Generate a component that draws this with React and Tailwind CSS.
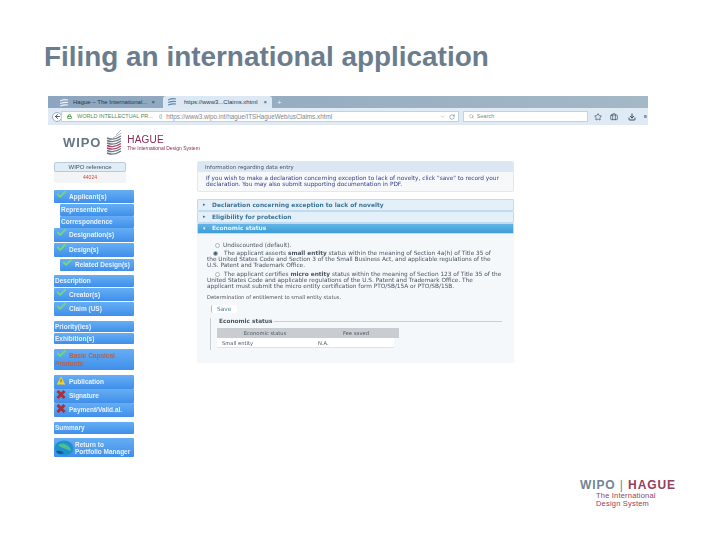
import { Check, RotateCw, Search, Star, Lock, ArrowLeft, Download, Briefcase, ChevronDown } from "lucide-react";

const navItems = [
  { label: "Applicant(s)", mark: "check", top: 0, height: 13 },
  { label: "Representative", sub: true, height: 12, top: 1 },
  { label: "Correspondence", sub: true, height: 12 },
  { label: "Designation(s)", mark: "check", height: 14 },
  { label: "Design(s)", mark: "check", height: 14, top: 1 },
  { label: "Related Design(s)", mark: "check", sub: true, height: 12, top: 2 },
  { label: "Description", height: 12, top: 4 },
  { label: "Creator(s)", mark: "check", height: 13, top: 1 },
  { label: "Claim (US)", mark: "check", height: 14, top: 1 },
  { label: "Priority(ies)", height: 11, top: 5 },
  { label: "Exhibition(s)", height: 11, top: 1 },
  { label: "Basic Capsical", second: "Products", mark: "check", red: true, height: 21, top: 5 },
  { label: "Publication", mark: "warn", height: 14, top: 5 },
  { label: "Signature", mark: "cross", height: 14 },
  { label: "Payment/Valid.al.", mark: "cross", height: 14 },
  { label: "Summary", height: 12, top: 5 },
];

function Mark({ type }) {
  if (type === "check") {
    return <Check size={11} strokeWidth={4} className="text-[#74d872] mr-[2px] -mt-[5px] shrink-0" />;
  }
  if (type === "warn") {
    return (
      <svg width="10" height="9" viewBox="0 0 10 10" className="mr-[3px] -mt-[3px] shrink-0">
        <path d="M5 .5 9.7 9.5H.3Z" fill="#f2d02c" />
        <rect x="4.5" y="3.5" width="1" height="3.5" fill="#6b5a10" />
      </svg>
    );
  }
  return (
    <svg width="10" height="9" viewBox="0 0 10 9" className="mr-[3px] -mt-[3px] shrink-0">
      <path d="M1.5 1 8.5 8M8.5 1 1.5 8" stroke="#a8323c" strokeWidth="3" />
    </svg>
  );
}

function NavButton({ item }) {
  return (
    <div
      className={`flex flex-col justify-center rounded-[1px] bg-gradient-to-b from-[#66aef4] to-[#3f8fea] px-[1px] text-[6.5px] leading-[8px] font-bold whitespace-nowrap ${
        item.sub ? "ml-[6px]" : ""
      } ${item.red ? "text-[#b9604a]" : "text-[#e6f2ff]"}`}
      style={{ height: item.height, marginTop: item.top || 0 }}
    >
      <div className={`flex items-center ${item.mark ? "pl-[1px]" : ""}`}>
        {item.mark && <Mark type={item.mark} />}
        <span>{item.label}</span>
      </div>
      {item.second && <div>{item.second}</div>}
    </div>
  );
}

function WipoGlobe() {
  const rows = [9, 11.5, 14, 16.5, 19, 21.5, 24];
  return (
    <svg width="16" height="28" viewBox="0 0 16 28" className="ml-[5px] mr-[5px]">
      <path d="M15 1 10 6M15.5 4 7 9" stroke="#9aa2a8" strokeWidth=".8" />
      {rows.map((y, i) => (
        <path
          key={y}
          d={`M1 ${y} Q8 ${y + 3} 15 ${y - 2}`}
          fill="none"
          stroke={i === 3 || i === 4 ? "#a8486a" : "#6f7a83"}
          strokeWidth="1.4"
        />
      ))}
    </svg>
  );
}

// favicon in the browser tabs
function TabIcon({ color }) {
  return (
    <svg width="8" height="8" viewBox="0 0 8 8" className="mr-[5px] shrink-0">
      <path d="M0 2Q4 0 8 1M0 4.5Q4 3 8 3.5M0 7Q4 5.5 8 6" fill="none" stroke={color} strokeWidth="1.1" />
    </svg>
  );
}

function AccordionRow({ label, open }) {
  return (
    <div
      className={`flex items-center pl-[5px] text-[5.9px] font-bold border border-[#c3dced] rounded-[1px] ${
        open ? "bg-gradient-to-b from-[#63b5e6] to-[#3d9dd8] text-[#e8f5fd] h-[11px]" : "h-[12px] bg-[#e3f0f9] text-[#3d7396]"
      }`}
    >
      <span className="w-[9px] text-[5px]">{open ? "▾" : "▸"}</span>
      {label}
    </div>
  );
}

export default function App() {
  return (
    <div className="w-[720px] h-[540px] bg-white flex flex-col overflow-hidden font-['Liberation_Sans',sans-serif]">
      <h1 className="pt-[42px] pl-[44px] text-[27.9px] leading-[30px] font-bold text-[#6a7d8e] whitespace-nowrap">
        Filing an international application
      </h1>

      {/* Browser screenshot, soft like the scaled original */}
      <div className="mt-[24px] ml-[48px] w-[600px] blur-[0.45px]">
        {/* Tabs */}
        <div className="h-[12px] flex items-end bg-gradient-to-r from-[#8da6bf] to-[#a4b8c6] text-[6px] text-[#26384a] whitespace-nowrap">
          <div className="w-[112px] h-[11px] flex items-center justify-between pl-[12px] pr-[5px]">
            <TabIcon color="#e8f0f6" />
            <span className="flex-1">Hague – The International...</span>
            <span>×</span>
          </div>
          <div className="ml-[3px] w-[109px] h-[12px] flex items-center justify-between pl-[5px] pr-[5px] bg-[#dce9f4] rounded-t-[3px]">
            <TabIcon color="#5d86ad" />
            <span className="flex-1 ml-[3px]">https://www3...Claims.xhtml</span>
            <span>×</span>
          </div>
          <span className="ml-[5px] h-[11px] text-[8px] leading-[11px] text-[#e8f0f6]">+</span>
        </div>

        {/* Address bar */}
        <div className="h-[17px] flex items-center bg-[#dfeaf5] pl-[4px] pr-[1px] text-[5.5px] text-[#7d8790] whitespace-nowrap">
          <div className="w-[10px] h-[10px] rounded-full bg-white border border-[#9fb0bf] flex items-center justify-center shrink-0">
            <ArrowLeft size={7} strokeWidth={3} className="text-[#33485a]" />
          </div>
          <div className="ml-[-1px] w-[398px] h-[11px] flex items-center bg-white border border-[#c4d2de] pl-[5px] pr-[3px]">
            <Lock size={5} strokeWidth={4} className="text-[#3f9a3f] mr-[5px]" />
            <span className="text-[#5c8a5c] w-[78px]">WORLD INTELLECTUAL PR...</span>
            <span className="mx-[4px]">(|</span>
            <span className="text-[6.3px]">https://www3.wipo.int/hague/ITSHagueWeb/usClaims.xhtml</span>
            <ChevronDown size={5} className="ml-auto mr-[4px]" />
            <RotateCw size={6} className="text-[#5a7386]" />
          </div>
          <div className="ml-[4px] w-[125px] h-[11px] flex items-center bg-white border border-[#c4d2de] pl-[5px]">
            <Search size={5} className="mr-[3px]" />
            <span>Search</span>
          </div>
          <Star size={8} strokeWidth={2} className="ml-[6px] text-[#33485a]" />
          <Briefcase size={8} strokeWidth={2} className="ml-[8px] text-[#33485a]" />
          <Download size={8} strokeWidth={3} className="ml-[10px] text-[#33485a]" />
          <span className="ml-[8px] text-[#33485a]">≡</span>
        </div>

        {/* Page header */}
        <div className="h-[36px] flex items-center pl-[15px]">
          <span className="text-[13px] font-bold tracking-[0.9px] text-[#657685]">WIPO</span>
          <WipoGlobe />
          <div className="flex flex-col">
            <span className="text-[10px] leading-[10px] tracking-[0.2px] text-[#8b2a50]">HAGUE</span>
            <span className="text-[5px] leading-[6px] text-[#8b2a50]">The International Design System</span>
          </div>
        </div>

        <div className="flex">
          {/* Sidebar */}
          <aside className="w-[149px] pl-[6px] shrink-0">
            <div className="w-[72px] h-[21px] mt-[1px] rounded-[2px] bg-[#f2f4f6] text-center">
              <div className="h-[10px] rounded-[2px] border border-[#b9cbd8] bg-[#e1edf6] text-[6px] leading-[8px] text-[#42525f]">
                WIPO reference
              </div>
              <div className="text-[5px] leading-[10px] text-[#d0483c]">44024</div>
            </div>
            <nav className="w-[80px] mt-[7px]">
              {navItems.map((item) => (
                <NavButton key={item.label} item={item} />
              ))}
              <div className="mt-[4px] h-[19px] flex items-center rounded-[1px] bg-gradient-to-b from-[#66aef4] to-[#3f8fea] text-[6.5px] leading-[7px] font-bold text-[#e6f2ff]">
                <svg width="20" height="16" viewBox="0 0 20 16" className="mr-[1px] shrink-0">
                  <ellipse cx="10" cy="8" rx="9.5" ry="7.5" fill="#1f8fd0" />
                  <path d="M4 5Q9 2 13 5T17 11Q12 9 9 8T4 5Z" fill="#4cc08a" />
                  <path d="M2 11Q7 10 10 13 6 15 3 13Z" fill="#0e5d9a" />
                </svg>
                <div className="whitespace-nowrap">
                  <div>Return to</div>
                  <div>Portfolio Manager</div>
                </div>
              </div>
            </nav>
          </aside>

          {/* Main content */}
          <main className="w-[317px] shrink-0 font-['DejaVu_Sans',sans-serif] whitespace-nowrap">
            <section className="h-[31px] rounded-[2px] border border-[#e3e8ec] bg-[#f6f8fa]">
              <div className="h-[10px] pl-[7px] bg-[#dbe8f3] text-[5.4px] leading-[10px] text-[#46535e]">
                Information regarding data entry
              </div>
              <div className="pl-[8px] pt-[3px] text-[5.8px] leading-[6px] text-[#35408c]">
                <div>If you wish to make a declaration concerning exception to lack of novelty, click "save" to record your</div>
                <div>declaration. You may also submit supporting documentation in PDF.</div>
              </div>
            </section>

            <div className="mt-[7px]">
              <AccordionRow label="Declaration concerning exception to lack of novelty" />
              <AccordionRow label="Eligibility for protection" />
              <AccordionRow label="Economic status" open />
            </div>

            <section className="h-[129px] bg-[#f5f8fb] pl-[10px] pt-[8px] text-[5.8px] leading-[6px] text-[#4a5560]">
              <div className="flex items-center pl-[8px]">
                <span className="w-[5px] h-[5px] rounded-full border border-[#aab4bc] bg-white mr-[3px]" />
                Undiscounted (default).
              </div>
              <div className="mt-[2px]">
                <div className="flex items-center pl-[6px]">
                  <span className="w-[5px] h-[5px] rounded-full bg-[#47606f] border border-[#aab4bc] mr-[6px]" />
                  <span>
                    The applicant asserts <b>small entity</b> status within the meaning of Section 4a(h) of Title 35 of
                  </span>
                </div>
                <div>the United States Code and Section 3 of the Small Business Act, and applicable regulations of the</div>
                <div>U.S. Patent and Trademark Office.</div>
              </div>
              <div className="mt-[3px]">
                <div className="flex items-center pl-[8px]">
                  <span className="w-[5px] h-[5px] rounded-full border border-[#aab4bc] bg-white mr-[4px]" />
                  <span>
                    The applicant certifies <b>micro entity</b> status within the meaning of Section 123 of Title 35 of the
                  </span>
                </div>
                <div>United States Code and applicable regulations of the U.S. Patent and Trademark Office. The</div>
                <div>applicant must submit the micro entity certification form PTO/SB/15A or PTO/SB/15B.</div>
              </div>
              <div className="mt-[5px] text-[5.2px]">Determination of entitlement to small entity status.</div>
              <div className="mt-[5px] ml-[4px] w-[26px] h-[8px] rounded-[2px] border-l border-[#9cc6de] bg-white pl-[5px] leading-[8px] text-[#4a7f9f]">
                Save
              </div>
              <div className="mt-[5px] ml-[3px] w-[292px] h-[32px] border-l border-[#c9ced2]">
                <div className="flex items-center h-[6px] pl-[8px] font-bold">
                  <span className="mr-[2px]">Economic status</span>
                  <span className="flex-1 border-t border-[#c9ced2]" />
                </div>
                <div className="ml-[6px] mt-[4px] w-[182px] text-[5.2px]">
                  <div className="flex h-[10px] bg-[#c9ccd0] leading-[10px] text-center text-[#4d5760]">
                    <span className="w-[96px]">Economic status</span>
                    <span className="flex-1">Fee saved</span>
                  </div>
                  <div className="flex h-[10px] w-[177px] leading-[10px] bg-white border-b border-[#dfe3e6]">
                    <span className="w-[96px] pl-[5px]">Small entity</span>
                    <span className="pl-[5px]">N.A.</span>
                  </div>
                </div>
              </div>
            </section>
          </main>
        </div>
      </div>

      {/* Footer logo */}
      <footer className="mt-auto pb-[32px] pr-[43px] flex flex-col items-end">
        <div className="w-[97px] text-[12px] leading-[12px] font-bold tracking-[0.9px] whitespace-nowrap">
          <span className="text-[#738493]">WIPO</span>
          <span className="text-[#738493] font-normal"> | </span>
          <span className="text-[#94405f]">HAGUE</span>
        </div>
        <div className="w-[81px] mt-[1px] text-[7.5px] leading-[8px] tracking-[0.2px] text-[#94405f] whitespace-nowrap">
          <div>The International</div>
          <div>Design System</div>
        </div>
      </footer>
    </div>
  );
}
